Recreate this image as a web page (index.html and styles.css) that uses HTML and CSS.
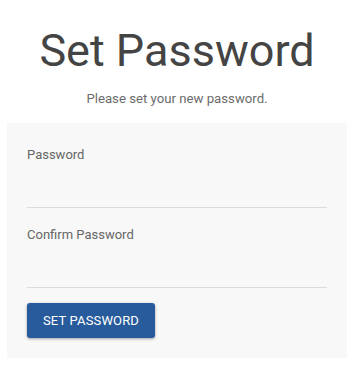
FILE: index.html
```html
<!DOCTYPE html>
<html>
<head>
<meta charset="utf-8">
<link rel="stylesheet" href="styles.css">
</head>
<body>
<div class="page">
  <h1 class="title">Set Password</h1>
  <p class="subtitle">Please set your new password.</p>
  <form class="card">
    <label class="field">
      <span class="label">Password</span>
      <input class="input" type="password">
    </label>
    <label class="field">
      <span class="label">Confirm Password</span>
      <input class="input" type="password">
    </label>
    <button class="btn" type="button">SET PASSWORD</button>
  </form>
</div>
</body>
</html>
```
FILE: styles.css
```css
html, body {
  margin: 0;
  padding: 0;
  background: #ffffff;
  font-family: Roboto, "Liberation Sans", sans-serif;
}
.page {
  width: 340px;
  margin-left: 7px;
  padding-top: 24px;
  display: flex;
  flex-direction: column;
}
.title {
  margin: 0;
  font-size: 45px;
  line-height: 53px;
  font-weight: 400;
  color: #444444;
  text-align: center;
}
.subtitle {
  margin: 12px 0 0;
  font-size: 13.2px;
  line-height: 20px;
  color: #6b6b6b;
  text-align: center;
}
.card {
  margin-top: 14px;
  background: #f8f8f8;
  padding: 22px 20px 20px;
  display: flex;
  flex-direction: column;
  align-items: flex-start;
}
.field {
  display: flex;
  flex-direction: column;
  align-self: stretch;
}
.field + .field {
  margin-top: 17px;
}
.label {
  font-size: 13px;
  line-height: 20px;
  color: #666666;
}
.input {
  height: 43px;
  box-sizing: border-box;
  border: none;
  border-bottom: 1px solid #dcdcdc;
  background: transparent;
  padding: 0;
  margin: 0;
  outline: none;
  font-family: inherit;
  font-size: 14px;
}
.btn {
  margin-top: 15px;
  height: 35px;
  padding: 0 16px;
  border: none;
  border-radius: 3px;
  background: #275b9c;
  color: #ffffff;
  font-family: Roboto, "Liberation Sans", sans-serif;
  font-size: 13px;
  letter-spacing: 0.15px;
  white-space: nowrap;
  box-shadow: 0 1px 3px rgba(0,0,0,0.35);
}
```
